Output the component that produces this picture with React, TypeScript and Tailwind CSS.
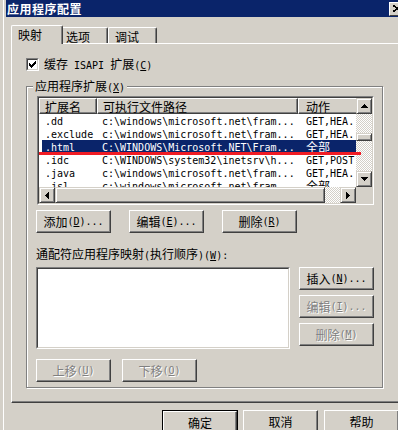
import React from "react";

const CJK_RE = /[\u2E80-\u9FFF\uFF00-\uFFEF\u3000-\u303F]+|[^\u2E80-\u9FFF\uFF00-\uFFEF\u3000-\u303F]+/g;
const IS_CJK = /[\u2E80-\u9FFF\uFF00-\uFFEF\u3000-\u303F]/;

function Amp({ s }: { s: string }) {
  const out: React.ReactNode[] = [];
  let i = 0;
  let buf = "";
  while (i < s.length) {
    if (s[i] === "&" && i + 1 < s.length) {
      if (buf) out.push(buf);
      buf = "";
      out.push(
        <span key={i} className="underline underline-offset-[1px]">
          {s[i + 1]}
        </span>
      );
      i += 2;
    } else {
      buf += s[i];
      i++;
    }
  }
  if (buf) out.push(buf);
  return <>{out}</>;
}

function T({ text }: { text: string }) {
  const parts = text.match(CJK_RE) || [];
  return (
    <>
      {parts.map((p, i) =>
        IS_CJK.test(p) ? (
          <span key={i} className="[font-family:'Noto_Sans_CJK_SC',sans-serif] text-[12px]">
            {p}
          </span>
        ) : (
          <span key={i} className="[font-family:'DejaVu_Sans_Mono',monospace] text-[10px] whitespace-pre">
            <Amp s={p} />
          </span>
        )
      )}
    </>
  );
}

function Btn({ label, disabled }: { label: string; disabled?: boolean }) {
  return (
    <div
      className={`flex items-center justify-center h-[23px] w-[75px] shrink-0 bg-[#d4d0c8] border border-t-white border-l-white border-r-[#404040] border-b-[#404040] shadow-[inset_-1px_-1px_0_#808080] leading-[13px] whitespace-nowrap ${
        disabled ? "text-[#808080] [text-shadow:1px_1px_0_#fff]" : "text-black"
      }`}
    >
      <T text={label} />
    </div>
  );
}

function DefBtn({ label }: { label: string }) {
  return (
    <div className="border border-black shrink-0">
      <div className="flex items-center justify-center h-[22px] w-[74px] bg-[#d4d0c8] border border-t-white border-l-white border-r-[#404040] border-b-[#404040] shadow-[inset_-1px_-1px_0_#808080] leading-[13px] text-black">
        <T text={label} />
      </div>
    </div>
  );
}

function Arrow({ dir }: { dir: "up" | "down" | "left" | "right" }) {
  if (dir === "up")
    return (
      <svg width="7" height="4" viewBox="0 0 7 4" shapeRendering="crispEdges">
        <polygon points="3.5,0 7,4 0,4" fill="#000" />
      </svg>
    );
  if (dir === "down")
    return (
      <svg width="7" height="4" viewBox="0 0 7 4" shapeRendering="crispEdges">
        <polygon points="0,0 7,0 3.5,4" fill="#000" />
      </svg>
    );
  if (dir === "left")
    return (
      <svg width="4" height="7" viewBox="0 0 4 7" shapeRendering="crispEdges">
        <polygon points="4,0 4,7 0,3.5" fill="#000" />
      </svg>
    );
  return (
    <svg width="4" height="7" viewBox="0 0 4 7" shapeRendering="crispEdges">
      <polygon points="0,0 4,3.5 0,7" fill="#000" />
    </svg>
  );
}

function SBtn({ dir }: { dir: "up" | "down" | "left" | "right" }) {
  return (
    <div className="w-[16px] h-[16px] shrink-0 flex items-center justify-center bg-[#d4d0c8] border border-t-[#d4d0c8] border-l-[#d4d0c8] border-r-[#404040] border-b-[#404040] shadow-[inset_1px_1px_0_#fff,inset_-1px_-1px_0_#808080]">
      <Arrow dir={dir} />
    </div>
  );
}

function Raised({ className }: { className: string }) {
  return (
    <div
      className={`shrink-0 bg-[#d4d0c8] border border-t-[#d4d0c8] border-l-[#d4d0c8] border-r-[#404040] border-b-[#404040] shadow-[inset_1px_1px_0_#fff,inset_-1px_-1px_0_#808080] ${className}`}
    />
  );
}

const CHECKER =
  "bg-[image:repeating-conic-gradient(#ffffff_0%_25%,#d4d0c8_0%_50%)] bg-[length:2px_2px]";

type Row = { ext: string; path: string; act: string; sel?: boolean };
const rows: Row[] = [
  { ext: ".dd", path: "c:\\windows\\microsoft.net\\fram...", act: "GET,HEA..." },
  { ext: ".exclude", path: "c:\\windows\\microsoft.net\\fram...", act: "GET,HEA..." },
  { ext: ".html", path: "C:\\WINDOWS\\Microsoft.NET\\Fram...", act: "全部", sel: true },
  { ext: ".idc", path: "C:\\WINDOWS\\system32\\inetsrv\\h...", act: "GET,POST" },
  { ext: ".java", path: "c:\\windows\\microsoft.net\\fram...", act: "GET,HEA..." },
  { ext: ".jsl", path: "c:\\windows\\microsoft.net\\fram...", act: "全部" },
];

const HEAD =
  "h-[16px] shrink-0 bg-[#d4d0c8] border border-t-white border-l-white border-r-[#404040] border-b-[#404040] shadow-[inset_-1px_-1px_0_#808080] flex items-center leading-[13px] overflow-hidden whitespace-nowrap";

export default function App() {
  return (
    <div className="w-[398px] h-[430px] overflow-hidden bg-[#d4d0c8] text-black [font-family:'Noto_Sans_CJK_SC',sans-serif] text-[12px] leading-[13px] select-none">
      <div className="ml-[3px] h-full border-l border-white flex flex-col">
        {/* Title bar */}
        <div className="ml-[2px] w-[420px] h-[17px] shrink-0 bg-[#0a246a] flex items-center">
          <span className="pl-[1px] text-white font-bold text-[12px] tracking-[0.5px] leading-[17px]">
            应用程序配置
          </span>
          <div className="ml-auto mr-[21px] w-[16px] h-[14px] bg-[#d4d0c8] border border-t-white border-l-white border-r-[#404040] border-b-[#404040] flex items-center justify-center">
            <svg width="8" height="7" viewBox="0 0 8 7" shapeRendering="crispEdges">
              <path d="M0 0 L8 7 M8 0 L0 7" stroke="#000" strokeWidth="1.6" />
            </svg>
          </div>
        </div>

        {/* Tabs */}
        <div className="ml-[7px] mt-[8px] h-[18px] flex items-end shrink-0">
          <div className="relative z-10 -mb-[1px] h-[19px] w-[52px] pl-[6px] pt-[2px] bg-[#d4d0c8] border-t border-l border-r border-t-white border-l-white border-r-[#404040] shadow-[inset_-1px_0_0_#808080] rounded-t-[2px]">
            映射
          </div>
          <div className="h-[16px] w-[45px] pl-[3px] pt-[2px] bg-[#d4d0c8] border-t border-r border-t-white border-r-[#404040] shadow-[inset_-1px_0_0_#808080] rounded-tr-[2px]">
            选项
          </div>
          <div className="h-[16px] w-[49px] pl-[6px] pt-[2px] bg-[#d4d0c8] border-t border-l border-r border-t-white border-l-white border-r-[#404040] shadow-[inset_-1px_0_0_#808080] rounded-t-[2px]">
            调试
          </div>
        </div>

        {/* Panel */}
        <div className="ml-[7px] w-[420px] h-[360px] shrink-0 border-t border-l border-b border-t-white border-l-white border-b-[#404040] shadow-[inset_0_-1px_0_#808080] pl-[14px] pt-[14px]">
          {/* checkbox */}
          <div className="flex items-center h-[13px]">
            <div className="w-[13px] h-[13px] border border-t-[#808080] border-l-[#808080] border-r-white border-b-white">
              <div className="w-full h-full bg-white border border-t-[#404040] border-l-[#404040] border-r-[#d4d0c8] border-b-[#d4d0c8] flex items-center justify-center">
                <svg width="7" height="7" viewBox="0 0 7 7" shapeRendering="crispEdges">
                  <polygon points="0,2 2,4 6,0 7,0 7,3 2,7 0,5" fill="#000" />
                </svg>
              </div>
            </div>
            <span className="ml-[5px] whitespace-nowrap">
              <T text="缓存 ISAPI 扩展(&C)" />
            </span>
          </div>

          {/* Group box */}
          <div className="relative mt-[15px] w-[357px] h-[302px] border border-[#808080] shadow-[inset_1px_1px_0_#fff,1px_1px_0_#fff] pl-[9px] pt-[9px]">
            <span className="absolute left-[6px] -top-[8px] px-[2px] bg-[#d4d0c8] whitespace-nowrap">
              <T text="应用程序扩展(&X)" />
            </span>

            {/* list view */}
            <div className="relative ml-[1px] w-[337px] h-[109px] border border-t-[#808080] border-l-[#808080] border-r-white border-b-white">
              <div className="w-full h-full bg-white border border-t-[#404040] border-l-[#404040] border-r-[#d4d0c8] border-b-[#d4d0c8] grid grid-cols-[317px_16px] grid-rows-[89px_16px]">
                <div className="overflow-hidden">
                  <div className="flex">
                    <div className={`${HEAD} w-[58px] pl-[5px]`}>扩展名</div>
                    <div className={`${HEAD} w-[201px] pl-[5px]`}>可执行文件路径</div>
                    <div className={`${HEAD} w-[70px] pl-[7px]`}>动作</div>
                  </div>
                  {rows.map((r) => (
                    <div
                      key={r.ext}
                      className={`ml-[3px] flex h-[13px] items-center leading-[13px] whitespace-nowrap overflow-hidden ${
                        r.sel ? "bg-[#0a246a] text-white" : "text-black"
                      }`}
                    >
                      <div className="w-[55px] pl-[3px] shrink-0 overflow-hidden">
                        <T text={r.ext} />
                      </div>
                      <div className="w-[201px] pl-[5px] shrink-0 overflow-hidden">
                        <T text={r.path} />
                      </div>
                      <div className="w-[58px] pl-[8px] shrink-0 overflow-hidden">
                        <T text={r.act} />
                      </div>
                    </div>
                  ))}
                </div>
                {/* vertical scrollbar */}
                <div className="flex flex-col bg-[#d4d0c8]">
                  <SBtn dir="up" />
                  <div className={`flex-1 ${CHECKER} flex flex-col`}>
                    <Raised className="mt-[19px] h-[8px] w-[16px]" />
                  </div>
                  <SBtn dir="down" />
                </div>
                {/* horizontal scrollbar */}
                <div className="flex">
                  <SBtn dir="left" />
                  <Raised className="w-[270px] h-[16px]" />
                  <div className={`flex-1 ${CHECKER}`} />
                  <SBtn dir="right" />
                </div>
                <div className="bg-[#d4d0c8]" />
              </div>
              <div className="absolute left-[1px] top-[55px] w-[322px] h-[3px] bg-[#f01c24]" />
            </div>

            {/* buttons */}
            <div className="mt-[5px] flex gap-[18px]">
              <Btn label="添加(&D)..." />
              <Btn label="编辑(&E)..." />
              <Btn label="删除(&R)" />
            </div>

            <div className="mt-[14px] whitespace-nowrap">
              <T text="通配符应用程序映射(执行顺序)(&W):" />
            </div>

            <div className="mt-[5px] flex gap-[9px]">
              <div className="w-[254px] h-[82px] border border-t-[#808080] border-l-[#808080] border-r-white border-b-white">
                <div className="w-full h-full bg-white border border-t-[#404040] border-l-[#404040] border-r-[#d4d0c8] border-b-[#d4d0c8]" />
              </div>
              <div className="flex flex-col gap-[5px]">
                <Btn label="插入(&N)..." />
                <Btn label="编辑(&I)..." disabled />
                <Btn label="删除(&M)" disabled />
              </div>
            </div>

            <div className="mt-[10px] flex gap-[11px]">
              <Btn label="上移(&U)" disabled />
              <Btn label="下移(&O)" disabled />
            </div>
          </div>
        </div>

        {/* bottom buttons */}
        <div className="mt-[7px] ml-[158px] flex items-start">
          <DefBtn label="确定" />
          <div className="ml-[5px]">
            <Btn label="取消" />
          </div>
          <div className="ml-[6px]">
            <Btn label="帮助" />
          </div>
        </div>
      </div>
    </div>
  );
}
